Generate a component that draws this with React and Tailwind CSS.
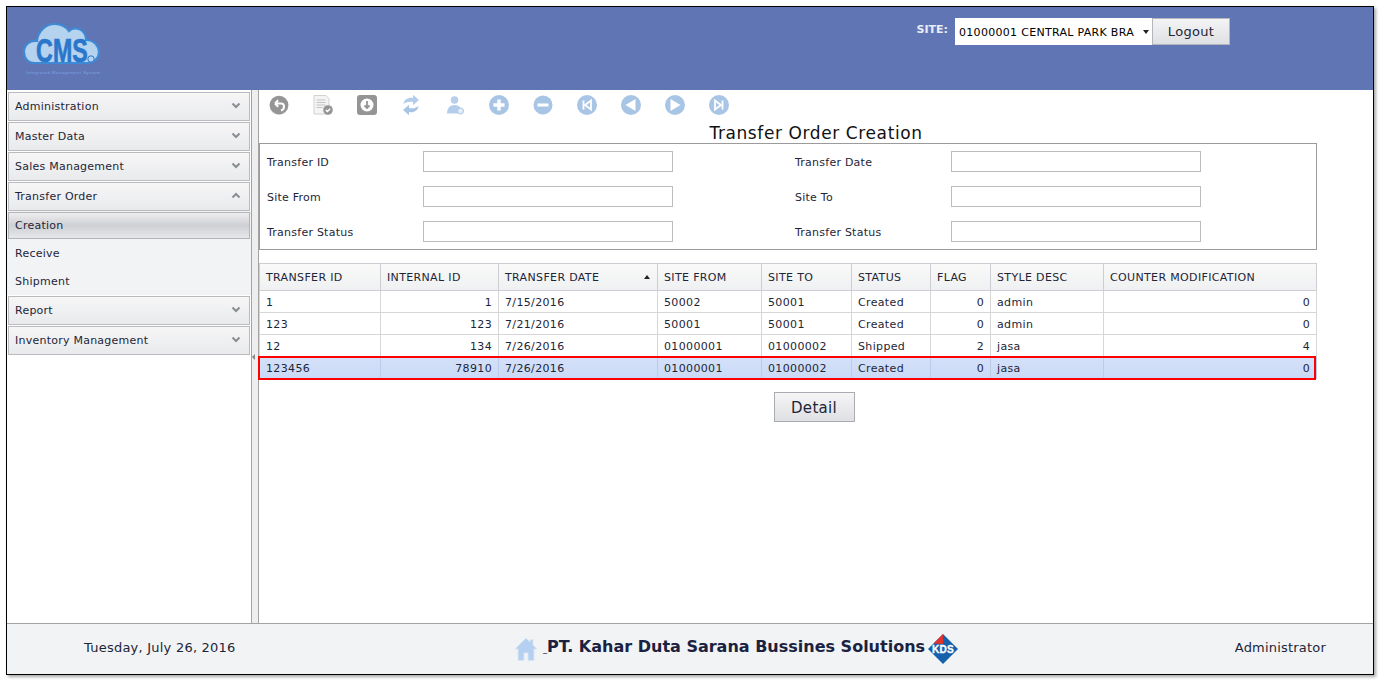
import React from 'react';

const FONT = "font-['DejaVu_Sans','Verdana',sans-serif]";

const columns = [
  { label: 'TRANSFER ID', w: 121 },
  { label: 'INTERNAL ID', w: 118, right: true },
  { label: 'TRANSFER DATE', w: 159, sort: true },
  { label: 'SITE FROM', w: 104 },
  { label: 'SITE TO', w: 90 },
  { label: 'STATUS', w: 79 },
  { label: 'FLAG', w: 60, right: true },
  { label: 'STYLE DESC', w: 113 },
  { label: 'COUNTER MODIFICATION', w: 213, right: true },
];

const rows = [
  ['1', '1', '7/15/2016', '50002', '50001', 'Created', '0', 'admin', '0'],
  ['123', '123', '7/21/2016', '50001', '50001', 'Created', '0', 'admin', '0'],
  ['12', '134', '7/26/2016', '01000001', '01000002', 'Shipped', '2', 'jasa', '4'],
  ['123456', '78910', '7/26/2016', '01000001', '01000002', 'Created', '0', 'jasa', '0'],
];

function Chevron({ up }) {
  return (
    <svg width="10" height="7" viewBox="0 0 10 7" className="mb-[2px] mr-[5px]">
      <path d={up ? 'M1.5 5.5 5 2l3.5 3.5' : 'M1.5 1.5 5 5l3.5-3.5'} fill="none" stroke="#8a8d92" strokeWidth="2" />
    </svg>
  );
}

function MenuHead({ label, up }) {
  return (
    <div className="mx-px mt-px flex h-[29px] items-center justify-between border border-[#b9bbbe] bg-gradient-to-b from-[#f6f6f7] to-[#e9eaec] pl-[6px] pr-[3px]">
      <span className="pt-[2px]">{label}</span>
      <Chevron up={up} />
    </div>
  );
}

function Field({ label }) {
  return (
    <div className="flex items-center">
      <span className="w-[156px] pt-[4px]">{label}</span>
      <div className="h-[21px] w-[250px] border border-[#bcbcbc] bg-white" />
    </div>
  );
}

function ToolIcon({ children }) {
  return (
    <svg width="22" height="22" viewBox="0 0 22 22" className="block">
      {children}
    </svg>
  );
}

const BLUE = '#a9c5e6';
const GREY = '#959595';

function Toolbar() {
  return (
    <div className="ml-[9px] flex h-[30px] items-center gap-[22px]">
      <ToolIcon>
        <circle cx="11" cy="11.500" r="9.500" fill="#d5d5d5" />
        <circle cx="11" cy="11" r="9.300" fill={GREY} />
        <path d="M7 9.500h6c2.200 0 3 1.600 3 3.200S14.800 16 13 16.500M7 9.500l3.200-3.200M7 9.500l3.200 3.200" fill="none" stroke="#fff" strokeWidth="2" />
      </ToolIcon>
      <ToolIcon>
        <path d="M2 1.500h12l3 3V20H2z" fill="#f4f4f4" stroke="#d2d2d2" />
        <path d="M4.500 6h9M4.500 8.500h9M4.500 11h9M4.500 13.500h6" stroke="#c4c4c4" />
        <circle cx="16" cy="16" r="4.800" fill={GREY} />
        <path d="m13.800 16 1.600 1.600 2.800-2.800" fill="none" stroke="#fff" strokeWidth="1.400" />
      </ToolIcon>
      <ToolIcon>
        <rect x="1" y="1" width="20" height="20" rx="3" fill={GREY} />
        <circle cx="11" cy="11" r="6.500" fill="#fff" />
        <path d="M11 7v7M8.500 11.500 11 14l2.500-2.500" fill="none" stroke={GREY} strokeWidth="1.800" />
      </ToolIcon>
      <ToolIcon>
        <path d="M3.500 10C4 5 8.500 3 13 4V.800L19 6l-6 5.200V8c-3.500-.8-6.800 0-9.500 2z" fill="#b4cdea" />
        <path d="M18.500 12c-.5 5-5 7-9.500 6v3.200L3 16l6-5.200V14c3.500.8 6.800 0 9.500-2z" fill={BLUE} />
      </ToolIcon>
      <ToolIcon>
        <circle cx="10.500" cy="6" r="3.800" fill="#b8cfea" />
        <path d="M3 19.500c0-5.500 3-8.500 7.500-8.500s7.500 3 7.500 8.500z" fill="#b4cdea" />
        <circle cx="16.500" cy="17" r="3" fill="#e3ecf7" stroke={BLUE} />
      </ToolIcon>
      <ToolIcon>
        <circle cx="11" cy="11" r="10" fill={BLUE} />
        <path d="M11 5.500v11M5.500 11h11" stroke="#fff" strokeWidth="3.400" />
      </ToolIcon>
      <ToolIcon>
        <circle cx="11" cy="11" r="9.500" fill={BLUE} />
        <path d="M5.500 11h11" stroke="#fff" strokeWidth="3" />
      </ToolIcon>
      <ToolIcon>
        <circle cx="11" cy="11" r="10" fill={BLUE} />
        <path d="M7.500 6.500v9" stroke="#fff" strokeWidth="1.800" />
        <path d="M15 6.500v9L9 11z" fill="none" stroke="#fff" strokeWidth="1.800" />
      </ToolIcon>
      <ToolIcon>
        <circle cx="11" cy="11" r="10" fill={BLUE} />
        <path d="M15.500 5v12L5.500 11z" fill="#fff" />
      </ToolIcon>
      <ToolIcon>
        <circle cx="11" cy="11" r="10" fill={BLUE} />
        <path d="M6.500 5v12l10-6z" fill="#fff" />
      </ToolIcon>
      <ToolIcon>
        <circle cx="11" cy="11" r="10" fill={BLUE} />
        <path d="M14.500 6.500v9" stroke="#fff" strokeWidth="1.800" />
        <path d="M7 6.500v9l6-4.500z" fill="none" stroke="#fff" strokeWidth="1.800" />
      </ToolIcon>
    </div>
  );
}

function CmsLogo() {
  return (
    <svg width="80" height="56" viewBox="0 0 80 56" className="block">
      <path
        d="M12 41C4 41 1 35 1 30 1 23 7 18 14 19 15 9 23 2 32 2c6 0 11 3 14 7 3-3 7-3 10-2 5 2 7 6 7 11 8 0 13 6 13 12s-5 11-12 11z"
        fill="#b5d2ee"
        stroke="#3e8ad6"
        strokeWidth="2.200"
      />
      <text x="13" y="40" fontFamily="'Liberation Sans',sans-serif" fontWeight="700" fontSize="33" fill="#2a76cb" stroke="#2a76cb" strokeWidth="0.700" textLength="52" lengthAdjust="spacingAndGlyphs">CMS</text>
      <circle cx="68" cy="37" r="3.200" fill="#b5d2ee" stroke="#2a76cb" />
      <text x="3" y="52" fontSize="4" fill="#7fa6e6" fontFamily="'Liberation Sans',sans-serif" textLength="74">Integrated Management System</text>
    </svg>
  );
}

function KdsLogo() {
  return (
    <svg width="30" height="30" viewBox="0 0 30 30" className="block">
      <path d="M15 0 30 15 15 30 0 15z" fill="#1561ab" />
      <path d="M15 0 5.500 9.500 15 10z" fill="#e2332f" />
      <text x="4" y="19" fontSize="11" fontWeight="700" fill="#fff" stroke="#fff" strokeWidth="0.300" fontFamily="'Liberation Sans',sans-serif" textLength="22" lengthAdjust="spacingAndGlyphs">KDS</text>
    </svg>
  );
}

function HomeIcon() {
  return (
    <svg width="24" height="26" viewBox="0 0 24 26" className="block">
      <path d="M12 2 1 13h3v11.500h6V17h4v7.500h6V13h3l-4-4V3.500h-3V6z" fill="#b5d0f0" stroke="#dde6f0" strokeWidth="0.900" />
    </svg>
  );
}

export default function App() {
  return (
    <div className={`h-[681px] w-[1380px] overflow-hidden bg-white pl-[6px] pt-[6px] text-[11px] tracking-[0.24px] text-[#1d2638] ${FONT}`}>
      <div className="flex h-[669px] w-[1368px] flex-col border border-black shadow-[2px_2px_3px_rgba(0,0,0,0.35)]">
        <header className="flex h-[83px] shrink-0 justify-between bg-[#6076b4]">
          <div className="pl-[16px] pt-[15px]">
            <CmsLogo />
          </div>
          <div className="mr-[143px] flex items-start pt-[11px]">
            <span className="mr-[7px] mt-[4px] text-[11px] font-bold tracking-normal text-[#e8edf7]">SITE:</span>
            <div className="flex h-[27px] w-[197px] items-center justify-between bg-white pl-[4px] pr-[3px] tracking-[0.3px] text-black">
              <span className="whitespace-nowrap pt-[4px]">01000001 CENTRAL PARK BRA</span>
              <span className="h-0 w-0 border-x-[3.500px] border-t-[4px] border-x-transparent border-t-[#222]" />
            </div>
            <div className="flex h-[27px] w-[78px] items-center justify-center border border-[#b3b6bc] bg-gradient-to-b from-[#f4f4f5] to-[#dfe0e3] text-[13px] tracking-[0.3px]">
              Logout
            </div>
          </div>
        </header>

        <div className="flex min-h-0 flex-1">
          <aside className="w-[244px] shrink-0 pt-px">
            <MenuHead label="Administration" />
            <MenuHead label="Master Data" />
            <MenuHead label="Sales Management" />
            <MenuHead label="Transfer Order" up />
            <div className="bg-[#f2f3f5] px-px pt-px">
              <div className="flex h-[27px] items-center border border-[#b2b4b8] bg-gradient-to-b from-[#eeeef0] via-[#cfd0d4] to-[#e6e7e9] pl-[6px] pt-[2px]">
                Creation
              </div>
              <div className="flex h-[28px] items-center pl-[7px] pt-[2px]">Receive</div>
              <div className="flex h-[28px] items-center pl-[7px] pt-[2px]">Shipment</div>
            </div>
            <MenuHead label="Report" />
            <MenuHead label="Inventory Management" />
          </aside>

          <div className="relative w-[8px] shrink-0 border-x border-[#a3a3a3] bg-[#eeeeee]">
            <span className="absolute left-0 top-[264px] h-0 w-0 border-y-[3px] border-r-[3px] border-y-transparent border-r-[#888]" />
          </div>

          <main className="min-w-0 flex-1">
            <Toolbar />
            <h1 className="mt-[3px] h-[20px] text-center text-[17px] font-normal leading-[20px] tracking-[0.6px] text-[#111]">
              Transfer Order Creation
            </h1>
            <div className="w-[1058px] border border-[#9b9b9b] px-[7px] py-[7px]">
              <div className="grid grid-cols-[528px_1fr] gap-y-[14px]">
                <Field label="Transfer ID" />
                <Field label="Transfer Date" />
                <Field label="Site From" />
                <Field label="Site To" />
                <Field label="Transfer Status" />
                <Field label="Transfer Status" />
              </div>
            </div>

            <div className="relative mt-[13px] w-[1058px]">
              <table className="w-full table-fixed border-collapse border border-[#a9abb2] tracking-[0.35px]">
                <colgroup>
                  {columns.map((c) => (
                    <col key={c.label} style={{ width: c.w }} />
                  ))}
                </colgroup>
                <thead>
                  <tr className="h-[27px] bg-gradient-to-b from-[#f9f9f9] to-[#eff0f1]">
                    {columns.map((c) => (
                      <th key={c.label} className="border border-[#cdced3] px-[6px] pt-[2px] text-left font-normal whitespace-nowrap">
                        <div className="flex items-center justify-between">
                          {c.label}
                          {c.sort && <span className="mb-[2px] mr-[1px] h-0 w-0 border-x-[3.500px] border-b-[4px] border-x-transparent border-b-[#222]" />}
                        </div>
                      </th>
                    ))}
                  </tr>
                </thead>
                <tbody>
                  {rows.map((r, i) => {
                    const sel = i === 3;
                    return (
                      <tr key={i} className={sel ? 'h-[22px] bg-gradient-to-b from-[#d5e1f9] to-[#c9d9f6]' : 'h-[22px]'}>
                        {r.map((v, j) => (
                          <td
                            key={j}
                            className={`${sel ? 'border-[#bccce8]' : 'border-[#d6d6d6]'} border px-[6px] pt-[4px] pb-0 ${columns[j].right ? 'text-right' : 'text-left'}`}
                          >
                            {v}
                          </td>
                        ))}
                      </tr>
                    );
                  })}
                </tbody>
              </table>
              <div className="pointer-events-none absolute left-[-1px] top-[93px] h-[24px] w-[1058px] border-2 border-[#f00]" />
            </div>

            <div className="mt-[13px] w-[1110px] text-center">
              <button className="h-[30px] w-[81px] border border-[#a9abb0] bg-gradient-to-b from-[#f5f5f6] to-[#dfe0e3] pt-[2px] text-[15px] tracking-[0.3px]">
                Detail
              </button>
            </div>
          </main>
        </div>

        <footer className="flex h-[51px] shrink-0 items-center border-t border-[#a3a3a3] bg-[#f1f3f5] pl-[77px] pr-[47px] text-[13px]">
          <span className="mb-[2px] w-[430px] tracking-[0.23px]">Tuesday, July 26, 2016</span>
          <div className="flex items-center">
            <HomeIcon />
            <span className="mb-[4px] ml-[5px] whitespace-nowrap text-[16px] font-bold tracking-normal text-[#1b2140]">
              <span className="text-[8px] font-normal">_</span>PT. Kahar Duta Sarana Bussines Solutions
            </span>
            <span className="ml-[3px]"><KdsLogo /></span>
          </div>
          <span className="mb-[2px] ml-auto tracking-[0.2px]">Administrator</span>
        </footer>
      </div>
    </div>
  );
}
